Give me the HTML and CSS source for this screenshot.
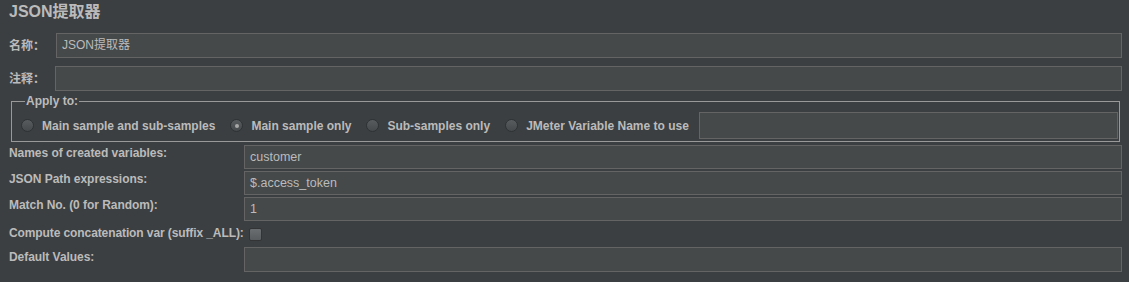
FILE: index.html
```html
<!DOCTYPE html>
<html lang="zh-CN">
<head>
  <meta charset="UTF-8">
  <title>JSON提取器</title>
  <link rel="stylesheet" href="styles.css">
</head>
<body>
  <h1 class="title">JSON提取器</h1>

  <div class="top-row">
    <label class="top-label" for="nameInput">名称：</label>
    <div class="field" id="nameInput">JSON提取器</div>
  </div>
  <div class="top-row">
    <label class="top-label top-label-comment" for="commentInput">注释：</label>
    <div class="field" id="commentInput"></div>
  </div>

  <!-- Apply to group -->
  <fieldset class="apply-box">
    <legend>Apply to:</legend>
    <div class="radio-row">
      <span class="radio-item"><span class="radio"></span>Main sample and sub-samples</span>
      <span class="radio-item"><span class="radio checked"></span>Main sample only</span>
      <span class="radio-item"><span class="radio"></span>Sub-samples only</span>
      <span class="radio-item"><span class="radio"></span>JMeter Variable Name to use</span>
      <div class="field var-field"></div>
    </div>
  </fieldset>

  <div class="props">
    <div class="prop-label">Names of created variables:</div>
    <div class="field small">customer</div>

    <div class="prop-label">JSON Path expressions:</div>
    <div class="field small">$.access_token</div>

    <div class="prop-label">Match No. (0 for Random):</div>
    <div class="field small">1</div>

    <div class="prop-label check-label">Compute concatenation var (suffix _ALL):</div>
    <div class="check-cell"><span class="checkbox"></span></div>

    <div class="prop-label default-label">Default Values:</div>
    <div class="field tall"></div>
  </div>
</body>
</html>
```

FILE: styles.css
```css
body {
  margin: 0;
  background-color: #3c3f41;
  color: #bbbbbb;
  font-family: "Liberation Sans", "Noto Sans CJK SC", sans-serif;
  font-size: 12px;
  height: 282px;
  overflow: hidden;
}

.title {
  margin: 0;
  padding: 2px 9px 0;
  font-size: 16px;
  font-weight: bold;
  line-height: 20px;
  height: 20px;
  margin-bottom: 11px;
}

/* name / comment rows */
.top-row {
  display: flex;
  align-items: center;
  height: 25px;
  padding: 0 7px 0 9px;
  margin-bottom: 8px;
}

.top-label {
  width: 47px;
  flex-shrink: 0;
  font-weight: bold;
  line-height: 14px;
  height: 14px;
}

.top-label-comment {
  width: 46px;
}

.field {
  flex: 1;
  box-sizing: border-box;
  height: 25px;
  background-color: #45494a;
  border: 1px solid #646464;
  padding: 0 5px;
  line-height: 23px;
  font-size: 12.5px;
  color: #bbbbbb;
  white-space: nowrap;
  overflow: hidden;
}

.top-row .field {
  font-size: 12px;
}

/* Apply to group */
.apply-box {
  margin: -5px 9px 0 11px;
  padding: 4px 1px 2px 9px;
  border: 1px solid #999999;
}

.apply-box legend {
  margin-left: 4px;
  padding: 0 1px;
  font-weight: bold;
  line-height: 14px;
}

.radio-row {
  display: flex;
  align-items: center;
  gap: 15px;
}

.radio-item {
  display: flex;
  align-items: center;
  gap: 8px;
  font-weight: bold;
  white-space: nowrap;
}

.radio {
  box-sizing: border-box;
  width: 13px;
  height: 13px;
  border-radius: 50%;
  border: 1px solid #2f3234;
  background: linear-gradient(#585c5f, #45494b);
  position: relative;
}

.radio.checked::after {
  content: "";
  position: absolute;
  left: 3.5px;
  top: 3.5px;
  width: 4px;
  height: 4px;
  border-radius: 50%;
  background-color: #a8a8a8;
}

.var-field {
  height: 27px;
  margin-left: -5px;
}

/* property grid */
.props {
  display: grid;
  grid-template-columns: 235px 1fr;
  row-gap: 2px;
  padding: 3px 7px 0 9px;
}

.prop-label {
  font-weight: bold;
  line-height: 14px;
  padding-top: 1px;
  white-space: nowrap;
  letter-spacing: -0.05px;
}

.field.small {
  height: 24px;
  line-height: 22px;
}

.check-label {
  padding-top: 3px;
  letter-spacing: -0.1px;
}

.check-cell {
  height: 22px;
  padding-left: 5px;
  padding-top: 5px;
  box-sizing: border-box;
}

.checkbox {
  display: block;
  box-sizing: border-box;
  width: 13px;
  height: 13px;
  border: 1px solid #323436;
  border-radius: 2px;
  background: linear-gradient(#6b6e71, #595c5f);
}

.default-label {
  padding-top: 3px;
}

.field.tall {
  height: 25px;
}
```
